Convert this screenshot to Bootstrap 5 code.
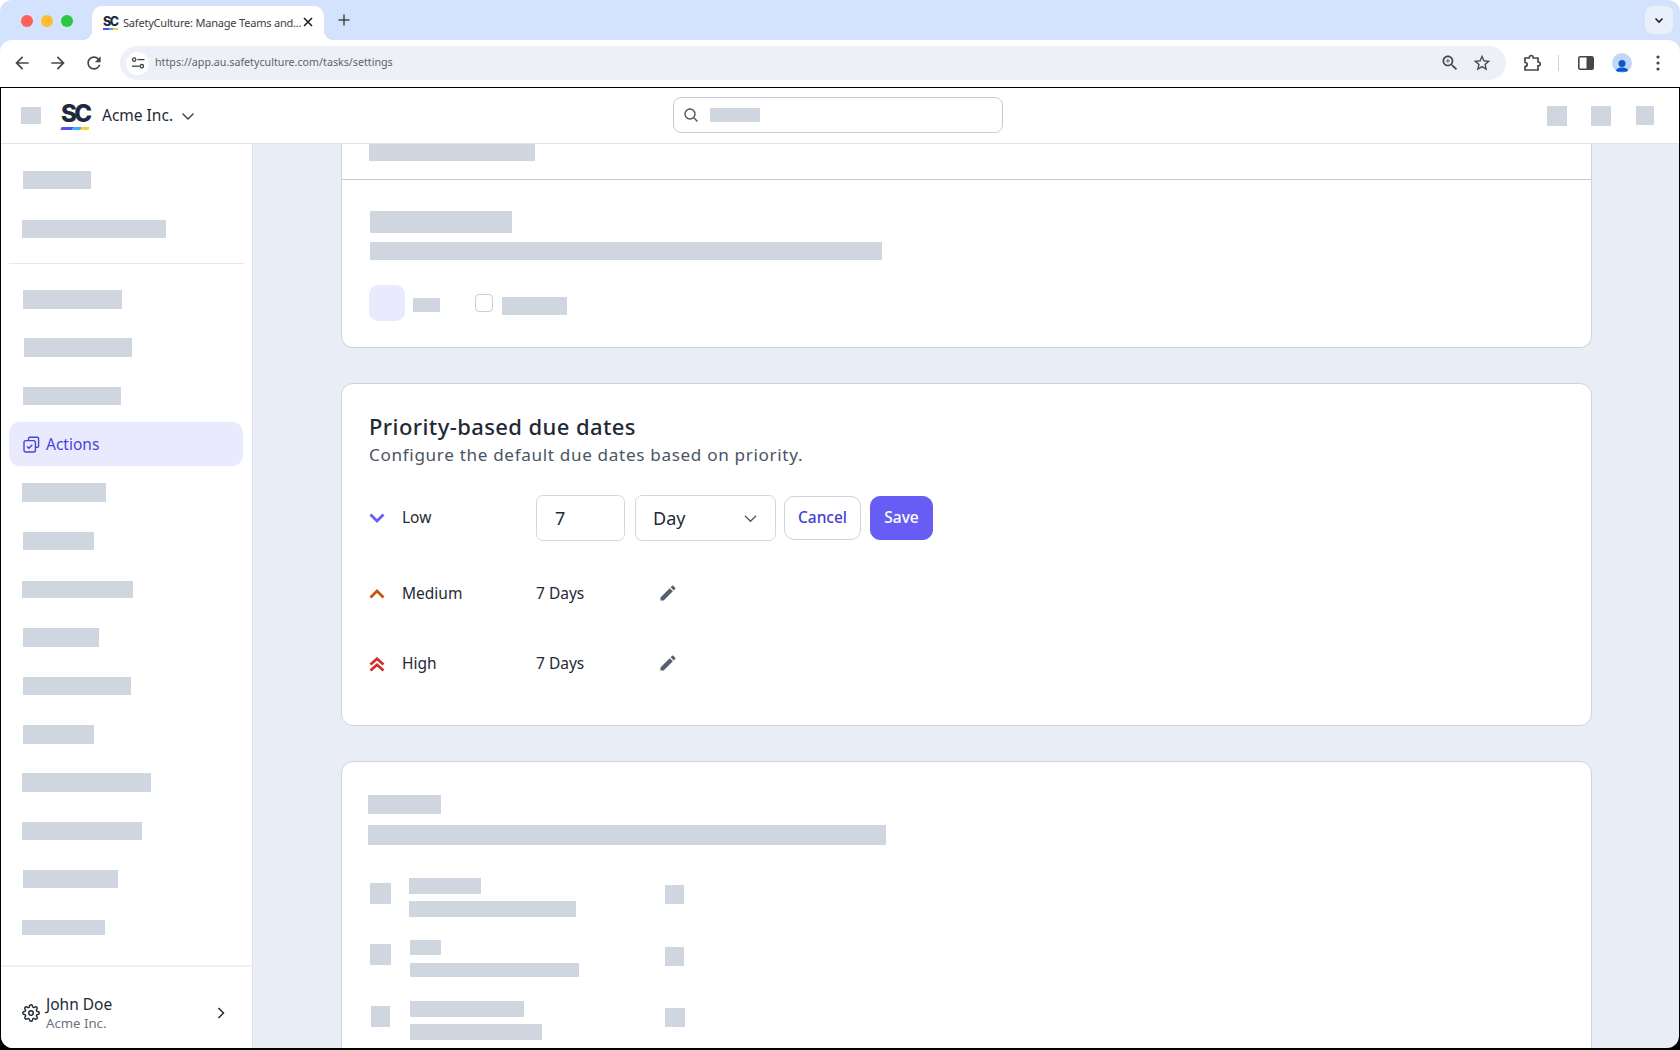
<!DOCTYPE html>
<html lang="en">
<head>
<meta charset="utf-8">
<title>SafetyCulture: Manage Teams and...</title>
<link href="https://cdn.jsdelivr.net/npm/bootstrap@5.3.0/dist/css/bootstrap.min.css" rel="stylesheet">
<style>
html,body{height:100%;}
body{margin:0;overflow:hidden;background:#fff;font-family:"Noto Sans","Liberation Sans",sans-serif;color:#1f2937;font-size:16px;}
.shell{height:1050px;}
.chrome-wrap{height:87px;background:#d3e3fd;border-radius:12px 12px 0 0;flex:none;}
.tabstrip{height:40px;}
.lights{width:92px;padding:0 0 0 21px;gap:8px;height:40px;}
.light{width:12px;height:12px;border-radius:50%;flex:none;margin-top:2px;}
.l-red{background:#ff5f57}.l-yel{background:#febc2e}.l-grn{background:#28c840}
.tabx{width:232px;height:34px;margin-top:6px;background:#fff;border-radius:10px 10px 0 0;padding:0 10px 0 11px;position:relative;font-size:11px;letter-spacing:-.2px;color:#3c4043;white-space:nowrap;}
.tabx::before,.tabx::after{content:"";position:absolute;bottom:0;width:10px;height:10px;}
.tabx::before{left:-10px;background:radial-gradient(circle at 0 0,transparent 10px,#fff 10.5px);}
.tabx::after{right:-10px;background:radial-gradient(circle at 100% 0,transparent 10px,#fff 10.5px);}
.favsc{font:800 12.5px/1 "Inter",sans-serif;letter-spacing:-1.4px;color:#1d2a3e;position:relative;width:16px;flex:none;padding-bottom:2px;}
.favsc::after{content:"";position:absolute;left:0;right:1px;bottom:0;height:2px;background:linear-gradient(90deg,#5b4df0 0 40%,#31b6f0 40% 70%,#f5d531 70%);}
.tabclose{margin-left:auto;width:12px;height:12px;flex:none;margin-top:-2px;}
.plus{margin-left:10px;}
.tabmenu{margin-left:auto;margin-right:7px;margin-top:6px;width:28px;height:28px;background:#e9f0fb;border-radius:8px;flex:none;}
.toolbar{height:47px;background:#fff;border-radius:12px 12px 0 0;padding:0 0 1px 12px;}
.tbtn{width:20px;height:20px;flex:none;fill:#474747;}
.tbtn-gap{margin-right:16px;}
.puzz{width:20px;height:20px;flex:none;fill:none;stroke:#474747;stroke-width:1.7;}
.omni{width:1386px;height:34px;background:#edf0f7;border-radius:17px;padding:0 14px 0 6px;font-size:10.7px;color:#5f6368;}
.sitebtn{width:23px;height:23px;background:#fff;border-radius:50%;margin-right:6px;flex:none;}
.urltext{padding-bottom:2px;}
.omni-end{margin-left:auto;gap:12px;}
.tools-right{margin-left:16px;}
.sep{width:1px;height:16px;background:#c5d6f5;margin:0 18px 0 16px;flex:none;}
.avatar{width:20px;height:20px;background:#c2d7f7;border-radius:50%;margin:0 24px 0 17px;flex:none;overflow:hidden;}
.frame{flex:1 1 auto;background:#000;padding:1px 1px 2px 1px;min-height:0;}
.inner{height:100%;background:#e9edf6;border-radius:0 0 12px 12px;overflow:hidden;}
.apphead{height:56px;background:#fff;border-bottom:1px solid #e0e3ec;flex:none;padding-left:20px;position:relative;}
.skel{background:#cfd6e0;flex:none;display:block;}
.brand{margin-left:20px;width:31px;flex:none;position:relative;color:#1d2a3e;font:800 24px/1 "Inter",sans-serif;letter-spacing:-2.5px;padding-bottom:4px;}
.brand::after{content:"";position:absolute;left:0;right:3px;bottom:0;height:3px;background:linear-gradient(90deg,#5b4df0 0 40%,#31b6f0 40% 70%,#f5d531 70%);transform:skewX(-20deg);}
.orgname{margin-left:10px;font-size:15.5px;color:#1f2937;}
.searchbox{position:absolute;left:672px;top:9px;width:330px;height:36px;border:1px solid #c6cbd6;border-radius:8px;background:#fff;padding-left:9px;}
.search-skel{margin-left:11px;}
.headright{margin-left:auto;margin-right:25px;}
.ms25{margin-left:25px;}
.sidebar{width:252px;flex:none;background:#fff;border-right:1px solid #dfe3ee;}
.navdiv{height:1px;background:#e5e7ee;margin:6.5px 8px 13.6px;flex:none;}
.navrow{height:44px;padding-left:14px;margin-bottom:4.3px;}
.navrow-top{height:44px;padding-left:14px;margin-bottom:5.5px;}
.navlist{padding:0 8px;}
.navlist-top{padding:13.5px 8px 0;}
.navrow.nav-active{background:#e9eafd;border-radius:11px;color:#4a43d6;font-size:15.5px;padding-left:14px;gap:6px;margin-right:1px;}
.foot{margin-top:auto;border-top:2px solid #eff0f5;height:83px;padding:27px 27px 0 21px;}
.foot-name{font-size:15.5px;line-height:20px;color:#1f2937;}
.foot-org{font-size:13.2px;line-height:18px;color:#6b7280;}
.foot-gear{margin:10px 6px 0 0;flex:none;}
.foot-chev{margin-top:12px;flex:none;}
.mainarea{flex:1 1 auto;padding:0 87px 0 88px;min-width:0;overflow:hidden;}
.panel{border:1px solid #ced3df;border-radius:12px;background:#fff;flex:none;}
.panel-top{border-top:0;border-radius:0 0 12px 12px;}
.sec-a{height:36px;border-bottom:1px solid #c5c9d3;padding-left:27px;}
.sec-b{padding:31px 0 26px 28px;}
.swatch{width:36px;height:36px;margin-left:-1px;border-radius:9px;background:#e9eafd;}
.tick{width:18px;height:18px;border:1px solid #c9cfdb;border-radius:4px;margin:0 9px 0 35px;flex:none;}
.panel-mid{margin-top:35px;padding:27px 0 37px 27px;height:343px;}
.ptitle{font-size:22px;line-height:30px;font-weight:500;color:#1f2937;letter-spacing:.41px;margin:0 0 1px;}
.psub{font-size:17.14px;line-height:26px;color:#4b5563;letter-spacing:.66px;margin:0;}
.prow{height:46px;font-size:15.5px;color:#1f2937;}
.prow-a{margin-top:27px;}
.prow-b{margin-top:30px;}
.prow-c{margin-top:24px;}
.picon{width:33px;flex:none;}
.plabel{width:134px;flex:none;}
.pval{width:122px;flex:none;}
.pedit{margin-top:-2px;flex:none;}
.numfield.form-control{width:89px;height:46px;border:1px solid #d3d7e1;border-radius:7px;font-size:18px;color:#1f2937;padding:0 18px;flex:none;box-shadow:none;}
.unitfield.form-select{width:141px;height:46px;margin-left:10px;border:1px solid #d3d7e1;border-radius:7px;font-size:18px;color:#1f2937;padding:0 40px 0 17px;flex:none;box-shadow:none;background-image:url("data:image/svg+xml,%3Csvg xmlns='http://www.w3.org/2000/svg' viewBox='0 0 14 14' fill='none' stroke='%234b5563' stroke-width='1.3'%3E%3Cpath d='M1 4l6 6 6-6'/%3E%3C/svg%3E");background-position:right 18px center;background-size:13px 13px;}
.btn.btn-cancel{width:77px;height:44px;margin-left:8px;background:#fff;border:1px solid #cfd3de;border-radius:10px;color:#4740d4;font-size:15.5px;font-weight:500;padding:0;}
.btn.btn-save{width:63px;height:44px;margin-left:9px;background:#675df4;border:1px solid #675df4;border-radius:10px;color:#fff;font-size:15.5px;font-weight:500;padding:0;}
.panel-low{margin-top:35px;padding:33px 0 0 26px;height:400px;}
.lrow{margin-left:2px;}
.lrow-1{margin-top:33px;}
.lrow-2{margin-top:23px;}
.lrow-3{margin-top:24px;}
.lcol{width:256px;flex:none;margin-left:18px;}
.lcol.lcol-b{margin-left:19px;}
.mt3x{margin-top:3px}.mt6x{margin-top:6px}.mt5x{margin-top:5px}.mt4x{margin-top:4px}.mt7x{margin-top:7px}.mt8x{margin-top:8px}.mt9x{margin-top:9px}.mt11x{margin-top:11px}.mt25x{margin-top:25px}
.ml1x{margin-left:1px}.mlm1x{margin-left:-1px}
.w18{width:18px}.w20{width:20px}.w21{width:21px}.w19{width:19px}.w27{width:27px}.w31{width:31px}.w50{width:50px}.w65{width:65px}.w68{width:68px}.w71{width:71px}.w72{width:72px}.w73{width:73px}.w76{width:76px}.w83{width:83px}.w84{width:84px}.w95{width:95px}.w98{width:98px}.w99{width:99px}.w108{width:108px}.w111{width:111px}.w114{width:114px}.w120{width:120px}.w129{width:129px}.w132{width:132px}.w142{width:142px}.w144{width:144px}.w166{width:166px}.w167{width:167px}.w169{width:169px}.w512{width:512px}.w518{width:518px}
.h14{height:14px}.h15{height:15px}.h16{height:16px}.h17{height:17px}.h18{height:18px}.h19{height:19px}.h20{height:20px}.h21{height:21px}.h22{height:22px}
</style>
</head>
<body>
<div class="shell d-flex flex-column">
  <div class="chrome-wrap">
    <div class="tabstrip d-flex">
      <div class="lights d-flex align-items-center"><span class="light l-red"></span><span class="light l-yel"></span><span class="light l-grn"></span></div>
      <div class="tabx d-flex align-items-center">
        <span class="favsc me-1">SC</span><span>SafetyCulture: Manage Teams and...</span>
        <svg class="tabclose" viewBox="0 0 12 12"><path d="M2 2l8 8M10 2l-8 8" stroke="#1f1f1f" stroke-width="1.6" fill="none"/></svg>
      </div>
      <div class="plus d-flex align-items-center"><svg width="20" height="20" viewBox="0 0 20 20"><path d="M10 4.5v11M4.5 10h11" stroke="#474747" stroke-width="1.5"/></svg></div>
      <div class="tabmenu d-flex align-items-center justify-content-center"><svg width="12" height="12" viewBox="0 0 12 12"><path d="M2.5 4.5L6 8l3.5-3.5" stroke="#1f1f1f" stroke-width="1.6" fill="none"/></svg></div>
    </div>
    <div class="toolbar d-flex align-items-center">
      <svg class="tbtn tbtn-gap" viewBox="0 0 24 24"><path d="M20 11H7.83l5.59-5.59L12 4l-8 8 8 8 1.41-1.41L7.83 13H20v-2z"/></svg>
      <svg class="tbtn tbtn-gap" viewBox="0 0 24 24"><path d="M12 4l-1.41 1.41L16.17 11H4v2h12.17l-5.58 5.59L12 20l8-8z"/></svg>
      <svg class="tbtn tbtn-gap" viewBox="0 0 24 24"><path d="M17.65 6.35C16.2 4.9 14.21 4 12 4c-4.42 0-7.99 3.58-7.99 8s3.57 8 7.99 8c3.73 0 6.84-2.55 7.73-6h-2.08c-.82 2.33-3.04 4-5.65 4-3.31 0-6-2.69-6-6s2.69-6 6-6c1.66 0 3.14.69 4.22 1.78L13 11h7V4l-2.35 2.35z"/></svg>
      <div class="omni d-flex align-items-center">
        <span class="sitebtn d-flex align-items-center justify-content-center"><svg width="14" height="14" viewBox="0 0 14 14" fill="none" stroke="#3c4043" stroke-width="1.3"><circle cx="3.2" cy="3.6" r="1.7"/><path d="M6.5 3.6h7"/><circle cx="10.8" cy="10.2" r="1.7"/><path d="M1 10.2h7.4"/></svg></span>
        <span class="urltext">https://app.au.safetyculture.com/tasks/settings</span>
        <span class="omni-end d-flex align-items-center">
          <svg class="tbtn" viewBox="0 0 24 24"><path d="M15.5 14h-.79l-.28-.27C15.41 12.59 16 11.11 16 9.5 16 5.91 13.09 3 9.5 3S3 5.91 3 9.5 5.91 16 9.5 16c1.61 0 3.09-.59 4.23-1.57l.27.28v.79l5 4.99L20.49 19l-4.99-5zm-6 0C7.01 14 5 11.99 5 9.5S7.01 5 9.5 5 14 7.01 14 9.5 11.99 14 9.5 14zm2.5-4h-2v2H9v-2H7V9h2V7h1v2h2v1z"/></svg>
          <svg class="tbtn" viewBox="0 0 24 24"><path d="M22 9.24l-7.19-.62L12 2 9.19 8.63 2 9.24l5.46 4.73L5.82 21 12 17.27 18.18 21l-1.63-7.03L22 9.24zM12 15.4l-3.76 2.27 1-4.28-3.32-2.88 4.38-.38L12 6.1l1.71 4.04 4.38.38-3.32 2.88 1 4.28L12 15.4z"/></svg>
        </span>
      </div>
      <span class="tools-right d-flex align-items-center">
        <svg class="puzz" viewBox="0 0 20 20"><path d="M3 5h4.2c0-1.5.8-2.5 2-2.5s2 1 2 2.5H16v4c1.3 0 2.2.8 2.2 1.9S17.3 12.8 16 12.8V17H3v-3.5c1.3 0 2.2-.9 2.2-2S4.3 9.5 3 9.5z"/></svg>
        <span class="sep"></span>
        <svg width="18" height="18" viewBox="0 0 18 18"><rect x="1.8" y="2.8" width="14.4" height="12.4" rx="1.5" fill="#fff" stroke="#474747" stroke-width="1.6"/><rect x="9.5" y="3" width="6.5" height="12" fill="#474747"/></svg>
        <span class="avatar d-block"><svg width="20" height="20" viewBox="0 0 20 20" fill="#0b57d0"><circle cx="10" cy="6.4" r="3.5"/><path d="M3.8 14.700c0-3 3-4.300 6.200-4.300s6.200 1.300 6.200 4.300z"/></svg></span>
        <svg width="4" height="16" viewBox="0 0 4 16" fill="#474747"><circle cx="2" cy="2" r="1.6"/><circle cx="2" cy="8" r="1.6"/><circle cx="2" cy="14" r="1.6"/></svg>
      </span>
    </div>
  </div>

  <div class="frame">
    <div class="inner d-flex flex-column">
      <header class="apphead d-flex align-items-center">
        <span class="skel w20 h17"></span>
        <span class="brand">SC</span>
        <span class="orgname">Acme Inc.</span>
        <svg class="ms-2" width="14" height="14" viewBox="0 0 14 14" fill="none" stroke="#374151" stroke-width="1.4"><path d="M1.5 4.500L7 10l5.500-5.500"/></svg>
        <div class="searchbox d-flex align-items-center">
          <svg width="16" height="16" viewBox="0 0 16 16" fill="none" stroke="#4b5563" stroke-width="1.4"><circle cx="7" cy="7" r="5"/><path d="M10.8 10.8L14.5 14.5"/></svg>
          <span class="skel w50 h14 search-skel"></span>
        </div>
        <div class="headright d-flex align-items-center">
          <span class="skel w20 h20"></span>
          <span class="skel w20 h20 ms-4"></span>
          <span class="skel w18 h19 ms25"></span>
        </div>
      </header>
      <div class="d-flex flex-grow-1 overflow-hidden">
        <aside class="sidebar d-flex flex-column">
          <div class="navlist-top">
            <div class="navrow-top d-flex align-items-center"><span class="skel w68 h18"></span></div>
            <div class="navrow-top d-flex align-items-center"><span class="skel w144 h18 mlm1x"></span></div>
          </div>
          <div class="navdiv"></div>
          <div class="navlist">
            <div class="navrow d-flex align-items-center"><span class="skel w99 h19"></span></div>
            <div class="navrow d-flex align-items-center"><span class="skel w108 h19 ml1x"></span></div>
            <div class="navrow d-flex align-items-center"><span class="skel w98 h18"></span></div>
            <div class="navrow nav-active d-flex align-items-center">
              <svg width="17" height="17" viewBox="0 0 17 17" fill="none" stroke="#4a43d6" stroke-width="1.4"><path d="M5.5 4.2V2.6c0-.8.6-1.4 1.4-1.4h7.3c.8 0 1.4.6 1.4 1.4v7.3c0 .8-.6 1.400-1.400 1.400h-1.600"/><rect x="1" y="4.6" width="11.4" height="11.4" rx="1.8"/><path d="M4 10.4l1.9 1.9 3.4-3.6"/></svg>
              <span>Actions</span>
            </div>
            <div class="navrow d-flex align-items-center"><span class="skel w84 h19 mlm1x"></span></div>
            <div class="navrow d-flex align-items-center"><span class="skel w71 h18"></span></div>
            <div class="navrow d-flex align-items-center"><span class="skel w111 h17 mlm1x"></span></div>
            <div class="navrow d-flex align-items-center"><span class="skel w76 h19"></span></div>
            <div class="navrow d-flex align-items-center"><span class="skel w108 h18"></span></div>
            <div class="navrow d-flex align-items-center"><span class="skel w71 h19"></span></div>
            <div class="navrow d-flex align-items-center"><span class="skel w129 h19 mlm1x"></span></div>
            <div class="navrow d-flex align-items-center"><span class="skel w120 h18 mlm1x"></span></div>
            <div class="navrow d-flex align-items-center"><span class="skel w95 h18"></span></div>
            <div class="navrow d-flex align-items-center"><span class="skel w83 h15 mlm1x"></span></div>
          </div>
          <div class="foot d-flex">
            <svg class="foot-gear" width="18" height="18" viewBox="0 0 24 24" fill="none" stroke="#1f2937" stroke-width="1.9"><circle cx="12" cy="12" r="3"/><path d="M19.4 15a1.65 1.65 0 0 0 .33 1.82l.06.06a2 2 0 0 1 0 2.83 2 2 0 0 1-2.83 0l-.06-.06a1.65 1.65 0 0 0-1.82-.33 1.65 1.65 0 0 0-1 1.51V21a2 2 0 0 1-2 2 2 2 0 0 1-2-2v-.09A1.65 1.65 0 0 0 9 19.4a1.65 1.65 0 0 0-1.82.33l-.06.06a2 2 0 0 1-2.83 0 2 2 0 0 1 0-2.83l.06-.06a1.65 1.65 0 0 0 .33-1.82 1.65 1.65 0 0 0-1.51-1H3a2 2 0 0 1-2-2 2 2 0 0 1 2-2h.09A1.65 1.65 0 0 0 4.6 9a1.65 1.65 0 0 0-.33-1.82l-.06-.06a2 2 0 0 1 0-2.83 2 2 0 0 1 2.83 0l.06.06a1.65 1.65 0 0 0 1.82.33H9a1.65 1.65 0 0 0 1-1.51V3a2 2 0 0 1 2-2 2 2 0 0 1 2 2v.09a1.65 1.65 0 0 0 1 1.51 1.65 1.65 0 0 0 1.82-.33l.06-.06a2 2 0 0 1 2.83 0 2 2 0 0 1 0 2.83l-.06.06a1.65 1.65 0 0 0-.33 1.82V9a1.65 1.65 0 0 0 1.51 1H21a2 2 0 0 1 2 2 2 2 0 0 1-2 2h-.09a1.65 1.65 0 0 0-1.51 1z"/></svg>
            <div class="flex-grow-1">
              <div class="foot-name">John Doe</div>
              <div class="foot-org">Acme Inc.</div>
            </div>
            <svg class="foot-chev" width="8" height="14" viewBox="0 0 8 14" fill="none" stroke="#1f2937" stroke-width="1.5"><path d="M1.5 2L6.5 7l-5 5"/></svg>
          </div>
        </aside>
        <main class="mainarea d-flex flex-column">
          <section class="panel panel-top">
            <div class="sec-a"><span class="skel w166 h17"></span></div>
            <div class="sec-b">
              <span class="skel w142 h22"></span>
              <span class="skel w512 h18 mt9x"></span>
              <div class="d-flex align-items-center mt25x">
                <span class="swatch d-block"></span>
                <span class="skel w27 h14 ms-2 mt3x"></span>
                <span class="tick"></span>
                <span class="skel w65 h18 mt6x"></span>
              </div>
            </div>
          </section>

          <section class="panel panel-mid">
            <h2 class="ptitle">Priority-based due dates</h2>
            <p class="psub">Configure the default due dates based on priority.</p>
            <div class="prow prow-a d-flex align-items-center">
              <span class="picon d-flex"><svg width="16" height="10" viewBox="0 0 16 10" fill="none" stroke="#675df4" stroke-width="2.8"><path d="M1.5 1.5L8 8l6.5-6.5"/></svg></span>
              <span class="plabel">Low</span>
              <input class="form-control numfield" type="text" value="7" aria-label="Amount">
              <select class="form-select unitfield" aria-label="Unit"><option>Day</option></select>
              <button class="btn btn-cancel" type="button">Cancel</button>
              <button class="btn btn-save" type="button">Save</button>
            </div>
            <div class="prow prow-b d-flex align-items-center">
              <span class="picon d-flex"><svg width="16" height="10" viewBox="0 0 16 10" fill="none" stroke="#c2570c" stroke-width="2.8"><path d="M1.5 8.5L8 2l6.5 6.5"/></svg></span>
              <span class="plabel">Medium</span>
              <span class="pval">7 Days</span>
              <svg class="pedit" width="20" height="20" viewBox="0 0 24 24" fill="#566070"><path d="M3 17.25V21h3.75L17.81 9.94l-3.75-3.75L3 17.25zM20.71 7.04c.39-.39.39-1.02 0-1.41l-2.34-2.34c-.39-.39-1.02-.39-1.41 0l-1.83 1.83 3.75 3.75 1.83-1.83z"/></svg>
            </div>
            <div class="prow prow-c d-flex align-items-center">
              <span class="picon d-flex"><svg width="16" height="15" viewBox="0 0 16 15" fill="none" stroke="#d32f2f" stroke-width="2.8"><path d="M1.5 7.5L8 1.8l6.5 5.7M1.5 13.5L8 7.8l6.5 5.7"/></svg></span>
              <span class="plabel">High</span>
              <span class="pval">7 Days</span>
              <svg class="pedit" width="20" height="20" viewBox="0 0 24 24" fill="#566070"><path d="M3 17.25V21h3.75L17.81 9.94l-3.75-3.75L3 17.25zM20.71 7.04c.39-.39.39-1.02 0-1.41l-2.34-2.34c-.39-.39-1.02-.39-1.41 0l-1.83 1.83 3.75 3.75 1.83-1.83z"/></svg>
            </div>
          </section>

          <section class="panel panel-low">
            <span class="skel w73 h19"></span>
            <span class="skel w518 h20 mt11x"></span>
            <div class="lrow lrow-1 d-flex align-items-start">
              <span class="skel w21 h21 mt5x"></span>
              <div class="lcol"><span class="skel w72 h16"></span><span class="skel w167 h16 mt7x"></span></div>
              <span class="skel w19 h19 mt7x"></span>
            </div>
            <div class="lrow lrow-2 d-flex align-items-start">
              <span class="skel w21 h21 mt4x"></span>
              <div class="lcol"><span class="skel w31 h15 ml1x"></span><span class="skel w169 h14 mt8x ml1x"></span></div>
              <span class="skel w19 h19 mt7x"></span>
            </div>
            <div class="lrow lrow-3 d-flex align-items-start">
              <span class="skel w19 h21 mt5x ml1x"></span>
              <div class="lcol lcol-b"><span class="skel w114 h16 ml1x"></span><span class="skel w132 h16 mt7x ml1x"></span></div>
              <span class="skel w20 h19 mt7x"></span>
            </div>
          </section>
        </main>
      </div>
    </div>
  </div>
</div>
<script src="https://cdn.jsdelivr.net/npm/bootstrap@5.3.0/dist/js/bootstrap.bundle.min.js"></script>
</body>
</html>
